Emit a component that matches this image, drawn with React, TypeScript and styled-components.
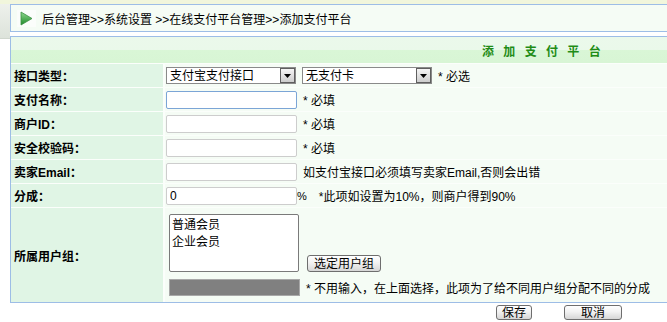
import React from "react";
import styled, { createGlobalStyle } from "styled-components";

const GlobalStyle = createGlobalStyle`
  html, body {
    margin: 0;
    padding: 0;
    background: #fff;
    overflow: hidden;
  }
  body {
    font-family: "Liberation Sans", "Noto Sans CJK SC", sans-serif;
    font-size: 12px;
    color: #000;
  }
`;

const FONT = `"Liberation Sans", "Noto Sans CJK SC", sans-serif`;
const BLUE = "#9dbde6";

const Page = styled.div`
  display: flex;
  flex-direction: column;
  width: 100%;
`;

const TopStrip = styled.div`
  height: 4px;
  background: #f1f6dc;
`;

const Body = styled.div`
  display: flex;
  align-items: flex-start;
`;

const Gutter = styled.div`
  flex: none;
  width: 10px;
  height: 34px;
  background: linear-gradient(#eef1ec, #dde3db);
  border-bottom: 1px solid #cfd6cd;
`;

const Main = styled.div`
  flex: 1;
  min-width: 0;
  display: flex;
  flex-direction: column;
`;

// the frame runs on past the right edge of the window, so no right border shows
const Breadcrumb = styled.div`
  height: 26px;
  border: 1px solid ${BLUE};
  border-right: none;
  background: #f5fcf5;
  display: flex;
  align-items: center;
  padding-left: 6px;
  gap: 6px;
  font-size: 12px;
  white-space: nowrap;
`;

const Panel = styled.div`
  margin-top: 4px;
  border: 1px solid ${BLUE};
  border-right: none;
  background: #fbfefb;
  display: flex;
  flex-direction: column;
  gap: 1px;
`;

const PanelHeader = styled.div`
  height: 26px;
  background: linear-gradient(#ebf9eb 0, #eaf9ea 48%, #d9f6d6 52%, #d8f5d5 100%);
  display: flex;
  align-items: center;
  padding-left: 471px;
`;

const Title = styled.span`
  color: #1f8c16;
  font-weight: bold;
  font-size: 12px;
  letter-spacing: 3px;
  white-space: nowrap;
`;

const Row = styled.div<{ $tall?: boolean }>`
  display: grid;
  grid-template-columns: 152px 1fr;
  column-gap: 2px;
  height: ${(p) => (p.$tall ? "94px" : "23px")};
`;

const Label = styled.div`
  background: #e0f5e5;
  display: flex;
  align-items: center;
  padding-left: 3px;
  font-weight: bold;
  font-size: 12px;
`;

const Value = styled.div`
  background: #f5fcf5;
  display: flex;
  align-items: center;
  padding-left: 1px;
  gap: 6px;
  min-width: 0;
`;

const GroupValue = styled.div`
  background: #f5fcf5;
  display: flex;
  flex-direction: column;
  padding: 6px 0 6px 4px;
  gap: 7px;
  min-width: 0;
`;

const Line = styled.div<{ $bottom?: boolean }>`
  display: flex;
  align-items: ${(p) => (p.$bottom ? "flex-end" : "center")};
  gap: ${(p) => (p.$bottom ? "8px" : "6px")};
`;

const Hint = styled.span`
  font-size: 12px;
  white-space: nowrap;
`;

const Percent = styled.span`
  font-size: 11px;
  margin-left: -6px;
  margin-right: 6px;
`;

const TextInput = styled.input<{ $focus?: boolean }>`
  box-sizing: border-box;
  flex: none;
  width: 131px;
  height: 18px;
  margin: 0;
  padding: 0 3px;
  font-family: ${FONT};
  font-size: 12px;
  background: #fff;
  border: 1px solid ${(p) => (p.$focus ? "#7ba5d6" : "#cdcdcd")};
  border-radius: 2px;
  outline: none;
`;

const GrayInput = styled.input`
  box-sizing: border-box;
  flex: none;
  width: 131px;
  height: 17px;
  margin: 0;
  background: #808080;
  border: 1px solid #a8a8a8;
  outline: none;
`;

const SelectWrap = styled.div<{ $w: number }>`
  position: relative;
  flex: none;
  width: ${(p) => p.$w}px;
  height: 17px;
`;

const Select = styled.select`
  appearance: none;
  box-sizing: border-box;
  width: 100%;
  height: 100%;
  margin: 0;
  padding: 0 0 0 3px;
  font-family: ${FONT};
  font-size: 12px;
  color: #000;
  background: #fff;
  border: 1px solid #8a8a8a;
  border-radius: 0;
  outline: none;
`;

const Arrow = styled.span`
  position: absolute;
  right: 1px;
  top: 1px;
  width: 15px;
  height: 15px;
  box-sizing: border-box;
  border: 1px solid #5f5f5f;
  background: linear-gradient(#f4f4f4, #cdcdcd);
  display: flex;
  align-items: center;
  justify-content: center;
  pointer-events: none;
`;

const ListBox = styled.select`
  box-sizing: border-box;
  flex: none;
  width: 130px;
  height: 58px;
  margin: 0;
  padding: 0;
  font-family: ${FONT};
  font-size: 12px;
  background: #fff;
  border: 1px solid #7a7a7a;
  outline: none;
  overflow: hidden;

  option {
    padding: 0 2px;
    line-height: 12px;
    min-height: 12px;
  }
`;

const Button = styled.button<{ $pad?: number }>`
  box-sizing: border-box;
  flex: none;
  height: 17px;
  margin: 0;
  padding: 0 ${(p) => p.$pad ?? 5}px;
  font-family: ${FONT};
  font-size: 12px;
  line-height: 14px;
  color: #000;
  background: linear-gradient(#ffffff, #f2f2f2 45%, #d6d6d6);
  border: 1px solid #6e6e6e;
  border-radius: 3px;
  cursor: pointer;
`;

const Actions = styled.div`
  display: flex;
  gap: 32px;
  margin: 2px 0 0 486px;

  ${Button} {
    height: 15px;
  }
`;

const PlayIcon = () => (
  <svg width="19" height="17" viewBox="0 0 19 17">
    <defs>
      <linearGradient id="pg" x1="0" y1="0" x2="0" y2="1">
        <stop offset="0" stopColor="#8fd88f" />
        <stop offset="1" stopColor="#1f8a2a" />
      </linearGradient>
    </defs>
    <rect width="19" height="17" fill="#fbfdfb" />
    <polygon points="4,2 15,8.5 4,15" fill="url(#pg)" stroke="#3c8f45" strokeWidth="0.8" />
  </svg>
);

const DropArrow = () => (
  <svg width="7" height="4" viewBox="0 0 7 4">
    <polygon points="0,0 7,0 3.5,4" fill="#000" />
  </svg>
);

const Required = "* 必填";

export default function App() {
  return (
    <>
      <GlobalStyle />
      <Page>
        <TopStrip />
        <Body>
          <Gutter />
          <Main>
            <Breadcrumb>
              <PlayIcon />
              <span>后台管理&gt;&gt;系统设置 &gt;&gt;在线支付平台管理&gt;&gt;添加支付平台</span>
            </Breadcrumb>
            <Panel>
              <PanelHeader>
                <Title>添 加 支 付 平 台</Title>
              </PanelHeader>
              <Row>
                <Label>接口类型：</Label>
                <Value>
                  <SelectWrap $w={130}>
                    <Select defaultValue="alipay">
                      <option value="alipay">支付宝支付接口</option>
                    </Select>
                    <Arrow>
                      <DropArrow />
                    </Arrow>
                  </SelectWrap>
                  <SelectWrap $w={130}>
                    <Select defaultValue="none">
                      <option value="none">无支付卡</option>
                    </Select>
                    <Arrow>
                      <DropArrow />
                    </Arrow>
                  </SelectWrap>
                  <Hint>* 必选</Hint>
                </Value>
              </Row>
              <Row>
                <Label>支付名称：</Label>
                <Value>
                  <TextInput $focus />
                  <Hint>{Required}</Hint>
                </Value>
              </Row>
              <Row>
                <Label>商户ID：</Label>
                <Value>
                  <TextInput />
                  <Hint>{Required}</Hint>
                </Value>
              </Row>
              <Row>
                <Label>安全校验码：</Label>
                <Value>
                  <TextInput />
                  <Hint>{Required}</Hint>
                </Value>
              </Row>
              <Row>
                <Label>卖家Email：</Label>
                <Value>
                  <TextInput />
                  <Hint>如支付宝接口必须填写卖家Email,否则会出错</Hint>
                </Value>
              </Row>
              <Row>
                <Label>分成：</Label>
                <Value>
                  <TextInput defaultValue="0" />
                  <Percent>%</Percent>
                  <Hint>*此项如设置为10%，则商户得到90%</Hint>
                </Value>
              </Row>
              <Row $tall>
                <Label>所属用户组：</Label>
                <GroupValue>
                  <Line $bottom>
                    <ListBox multiple size={4}>
                      <option>普通会员</option>
                      <option>企业会员</option>
                    </ListBox>
                    <Button $pad={6}>选定用户组</Button>
                  </Line>
                  <Line>
                    <GrayInput disabled />
                    <Hint>* 不用输入，在上面选择，此项为了给不同用户组分配不同的分成</Hint>
                  </Line>
                </GroupValue>
              </Row>
            </Panel>
            <Actions>
              <Button $pad={5}>保存</Button>
              <Button $pad={16}>取消</Button>
            </Actions>
          </Main>
        </Body>
      </Page>
    </>
  );
}
